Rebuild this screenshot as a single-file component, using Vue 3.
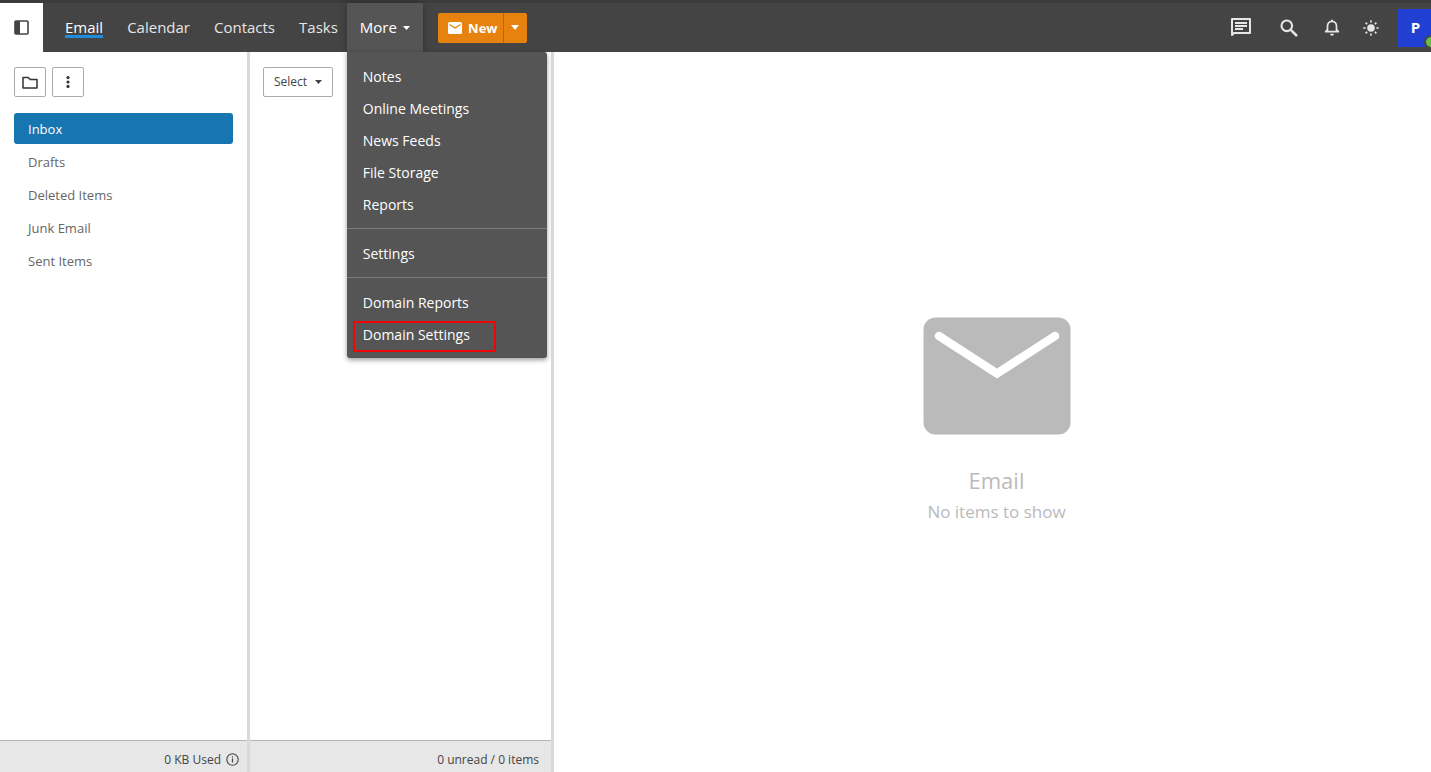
<script setup>
import { ref } from 'vue'

const folders = ['Inbox', 'Drafts', 'Deleted Items', 'Junk Email', 'Sent Items']
const active = ref('Inbox')
const tabs = ['Email', 'Calendar', 'Contacts', 'Tasks']
const menuOpen = ref(true)
const menuGroups = [
  ['Notes', 'Online Meetings', 'News Feeds', 'File Storage', 'Reports'],
  ['Settings'],
  ['Domain Reports', 'Domain Settings'],
]
</script>

<template>
  <div class="app">
    <header class="topbar">
      <button class="panel-toggle" aria-label="Toggle folder panel">
        <svg width="15" height="15" viewBox="0 0 15 15">
          <rect x="1" y="1" width="13" height="13" rx="1" fill="#fff" stroke="#444" stroke-width="1.6" />
          <rect x="1" y="1" width="5" height="13" fill="#444" />
        </svg>
      </button>
      <nav class="tabs">
        <a v-for="t in tabs" :key="t" href="#" class="tab" :class="{ current: t === 'Email' }"><span>{{ t }}</span></a>
        <div class="more">
          <button class="more-button" :aria-expanded="menuOpen" @click="menuOpen = !menuOpen">
            More
            <svg width="7" height="6" viewBox="0 0 7 6"><path d="M0 2h7L3.500 6z" fill="currentColor" /></svg>
          </button>
          <div v-if="menuOpen" class="menu">
            <ul v-for="(group, i) in menuGroups" :key="i" class="menu-group">
              <li v-for="m in group" :key="m">
                <a href="#" class="menu-item" :class="{ marked: m === 'Domain Settings' }">{{ m }}</a>
              </li>
            </ul>
          </div>
        </div>
      </nav>
      <div class="new">
        <button class="new-main">
          <svg width="14" height="12" viewBox="0 0 14 12">
            <rect width="14" height="12" rx="1.500" fill="#fff" />
            <path d="M1.500 2.500L7 6l5.500-3.500" fill="none" stroke="#e8820e" stroke-width="1.200" />
          </svg>
          New
        </button>
        <button class="new-drop" aria-label="More new items">
          <svg width="8" height="5" viewBox="0 0 8 5"><path d="M0 0h8L4 5z" fill="#fff" /></svg>
        </button>
      </div>
      <div class="tools">
        <button class="tool chat" aria-label="Chat">
          <svg width="22" height="20" viewBox="0 0 22 20" fill="none" stroke="#e6e6e6">
            <path d="M2 17V1h18v14H4z" stroke-width="2" stroke-linejoin="round" />
            <path d="M5 5h12M5 8h12M5 11h8" stroke-width="2" />
          </svg>
        </button>
        <button class="tool search" aria-label="Search">
          <svg width="18" height="18" viewBox="0 0 18 18" fill="none" stroke="#e6e6e6">
            <circle cx="6.800" cy="6.800" r="5.300" stroke-width="2.100" />
            <path d="M10.800 10.800L17 17" stroke-width="2.500" />
          </svg>
        </button>
        <button class="tool bell" aria-label="Notifications">
          <svg width="16" height="17" viewBox="0 0 16 17" fill="none" stroke="#e6e6e6">
            <path d="M3.500 12.500V7.500C3.500 4.500 5.300 2.500 8 2.500s4.500 2 4.500 5v5" stroke-width="1.700" />
            <path d="M1.600 12.700h12.800" stroke-width="1.700" stroke-linecap="round" />
            <path d="M3.500 10l-2 2.700M12.500 10l2 2.700" stroke-width="1.200" />
            <path d="M7 .8h2v1.500H7zM6 14.700h4a2 2 0 0 1-4 0z" fill="#e6e6e6" stroke="none" />
          </svg>
        </button>
        <button class="tool sun" aria-label="Theme">
          <svg width="16" height="16" viewBox="0 0 16 16">
            <circle cx="8" cy="8" r="3.800" fill="#e6e6e6" />
            <path d="M8 .3v2.300M8 13.400v2.300M.3 8h2.300M13.400 8h2.300M2.600 2.600l1.600 1.600M11.800 11.800l1.600 1.600M2.600 13.400l1.600-1.600M11.800 4.200l1.600-1.600" stroke="#e6e6e6" stroke-width="1.600" />
          </svg>
        </button>
        <button class="avatar" aria-label="Account">P<i class="status"></i></button>
      </div>
    </header>

    <div class="body">
      <aside class="pane folders">
        <div class="toolbar">
          <button class="box icon" aria-label="Folders">
            <svg width="16" height="13" viewBox="0 0 16 13" fill="none" stroke="#333" stroke-width="1.500" stroke-linejoin="round">
              <path d="M1 11V1.500h5.200l2 2H15V12H1z" />
            </svg>
          </button>
          <button class="box icon" aria-label="More actions">
            <svg width="4" height="12" viewBox="0 0 4 12" fill="#333">
              <circle cx="2" cy="1.600" r="1.600" /><circle cx="2" cy="6" r="1.600" /><circle cx="2" cy="10.400" r="1.600" />
            </svg>
          </button>
        </div>
        <ul class="folder-list">
          <li v-for="f in folders" :key="f">
            <a href="#" class="folder" :class="{ active: f === active }" @click.prevent="active = f">{{ f }}</a>
          </li>
        </ul>
        <footer class="footer">
          0 KB Used
          <svg width="13" height="13" viewBox="0 0 13 13" fill="none" stroke="#444">
            <circle cx="6.500" cy="6.500" r="5.700" stroke-width="1.100" />
            <path d="M6.500 5.500v4M6.500 3.300v1.200" stroke-width="1.200" />
          </svg>
        </footer>
      </aside>

      <section class="pane messages">
        <div class="toolbar">
          <button class="box select">
            Select
            <svg width="7" height="6" viewBox="0 0 7 6"><path d="M0 2h7L3.500 6z" fill="currentColor" /></svg>
          </button>
        </div>
        <footer class="footer">0 unread / 0 items</footer>
      </section>

      <main class="preview">
        <svg width="148" height="118" viewBox="0 0 148 118">
          <rect x="0.500" y="0.500" width="147" height="117" rx="12" fill="#bababa" />
          <path d="M16 19L74 56.500L132 19" fill="none" stroke="#fff" stroke-width="8.500" stroke-linecap="round" />
        </svg>
        <h1>Email</h1>
        <p>No items to show</p>
      </main>
    </div>
  </div>
</template>

<style>
html,
body,
#app {
  height: 100%;
}
body {
  margin: 0;
}
</style>

<style scoped>
.app {
  display: flex;
  flex-direction: column;
  height: 100%;
  overflow: hidden;
  background: #fff;
  color: #444;
  font-family: 'Segoe UI', 'Open Sans', 'Noto Sans', sans-serif;
  font-size: 13px;
}
button {
  display: flex;
  align-items: center;
  justify-content: center;
  margin: 0;
  padding: 0;
  border: 0;
  background: none;
  color: inherit;
  font: inherit;
  cursor: pointer;
}
a {
  color: inherit;
  text-decoration: none;
}
ul {
  margin: 0;
  padding: 0;
  list-style: none;
}
svg {
  display: block;
  flex: none;
}
.topbar {
  display: flex;
  flex: none;
  height: 49px;
  border-top: 3px solid #3c3c3c;
  background: #444;
}
.panel-toggle {
  width: 43px;
  background: #fff;
}
.tabs {
  display: flex;
  margin-left: 10px;
  color: #e6e6e6;
  font-size: 15px;
}
.tab {
  display: flex;
  align-items: center;
  padding: 0 12px 2px;
}
.tab span {
  line-height: 20px;
}
.tab.current {
  color: #fff;
}
.tab.current span {
  box-shadow: 0 1px 0 #1f8ddb, inset 0 -2px 0 #1f8ddb;
}
.more {
  position: relative;
  display: flex;
  margin-left: -3px;
}
.more-button {
  gap: 6px;
  width: 76px;
  padding-bottom: 2px;
  background: #555;
  color: #fff;
  box-shadow: 0 0 8px rgba(0, 0, 0, 0.3);
}
.menu {
  position: absolute;
  z-index: 5;
  top: 100%;
  left: 0;
  width: 200px;
  border-radius: 0 3px 3px 3px;
  background: #555;
  color: #fff;
  box-shadow: 0 2px 5px rgba(0, 0, 0, 0.4);
  font-size: 14px;
}
.menu-group {
  padding: 8px 0;
}
.menu-group:last-child {
  padding-bottom: 6px;
}
.menu-group + .menu-group {
  border-top: 1px solid #7b7b7b;
}
.menu-item {
  display: block;
  padding: 2px 16px 0;
  line-height: 30px;
}
.menu-item.marked {
  width: 131px;
  margin: 3px 6px 0;
  padding: 0 0 3px 8px;
  border: 2px solid #f00505;
  line-height: 24px;
}
.new {
  display: flex;
  align-self: center;
  height: 30px;
  margin-left: 15px;
  border-radius: 2px;
  background: #e8820e;
  color: #fff;
  font-weight: 700;
}
.new-main {
  gap: 6px;
  width: 65px;
  padding-left: 5px;
  box-sizing: border-box;
}
.new-drop {
  width: 24px;
  border-left: 1px solid #b9670c;
}
.tools {
  display: flex;
  align-items: center;
  margin-left: auto;
}
.chat {
  margin-right: 28px;
}
.search {
  margin-right: 26px;
}
.bell {
  margin-right: 23px;
}
.sun {
  margin-right: 18px;
}
.avatar {
  position: relative;
  box-sizing: border-box;
  width: 34px;
  height: 38px;
  padding: 0 0 2px 3px;
  border-radius: 2px 0 0 2px;
  background: #213fd3;
  color: #fff;
  font-size: 15px;
  font-weight: 700;
}
.status {
  position: absolute;
  right: -7px;
  bottom: -2px;
  width: 10px;
  height: 10px;
  border: 2px solid #444;
  border-radius: 50%;
  background: #6abf4b;
}
.body {
  display: flex;
  flex: 1;
  min-height: 0;
}
.pane {
  display: flex;
  flex: none;
  flex-direction: column;
  border-right: 3px solid #d9d9d9;
}
.folders {
  width: 247px;
}
.messages {
  width: 301px;
}
.toolbar {
  display: flex;
  gap: 6px;
  padding: 15px 13px 16px;
}
.folders .toolbar {
  padding-left: 14px;
}
.box {
  height: 30px;
  border: 1px solid #aaa;
  border-radius: 2px;
  background: #fff;
}
.icon {
  width: 32px;
}
.select {
  gap: 8px;
  width: 70px;
  padding-bottom: 2px;
  font-size: 12px;
}
.folder-list {
  display: flex;
  flex-direction: column;
  gap: 2px;
  padding: 0 14px;
}
.folder {
  display: block;
  padding: 2px 14px 0;
  border-radius: 3px;
  color: #666;
  line-height: 29px;
}
.folder.active {
  background: #1775b0;
  color: #fff;
}
.footer {
  display: flex;
  align-items: center;
  justify-content: flex-end;
  gap: 5px;
  height: 26px;
  margin-top: auto;
  padding: 5px 12px 0 0;
  border-top: 1px solid #b5b5b5;
  background: #e7e7e7;
  font-size: 12px;
}
.folders .footer {
  padding-right: 8px;
}
.preview {
  display: flex;
  flex: 1;
  flex-direction: column;
  align-items: center;
  justify-content: center;
  padding: 16px 0 0 8px;
  color: #bababa;
}
h1 {
  margin: 29px 0 0;
  font-size: 22px;
  font-weight: 400;
  line-height: 32px;
}
p {
  margin: 4px 0 0;
  font-size: 17px;
  line-height: 24px;
}
</style>
